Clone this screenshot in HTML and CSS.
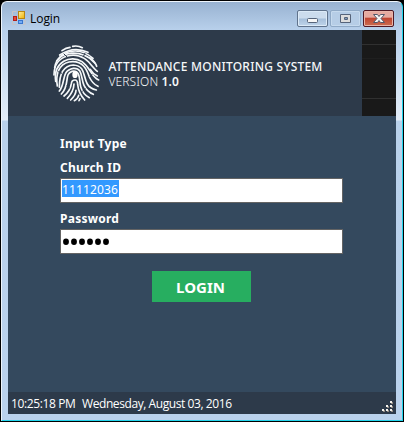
FILE: index.html
```html
<!DOCTYPE html>
<html lang="en">
<head>
<meta charset="utf-8">
<title>Login</title>
<link rel="stylesheet" href="styles.css">
</head>
<body>
<div class="desktop">
<main class="window">
  <header class="titlebar">
    <svg class="app-icon" width="14" height="14" viewBox="0 0 14 14">
      <defs><linearGradient id="gold" x2="1" y2="1"><stop stop-color="#fff0a0"/><stop offset="1" stop-color="#eeb000"/></linearGradient></defs>
      <path d="M.5 4.5V.5h4M.5 10v3.500h4M11 13.500h2V9" fill="none" stroke="#c9c4c4"/>
      <rect x="6.500" y=".5" width="6" height="7" fill="url(#gold)" stroke="#b98510"/>
      <rect x="1.500" y="5.500" width="3" height="4" fill="#e34a36" stroke="#b51e18"/>
      <rect x="6.500" y="9.500" width="4" height="3" fill="#75acf4" stroke="#3976cf"/>
    </svg>
    <h1>Login</h1>
    <div class="controls">
      <button class="control" aria-label="Minimize"><svg width="29" height="15"><rect x="9.500" y="7.500" width="10" height="4" rx="1" fill="#f6f6f6" stroke="#56647a"/></svg></button>
      <button class="control disabled" aria-label="Maximize"><svg width="29" height="15"><path d="M9.500 3.500h10v8h-10zM13.500 6.500h3v2h-3z" fill="#ddd" stroke="#56647a"/><path d="M14 7h2v1h-2z" fill="#7e99b9"/></svg></button>
      <button class="control close" aria-label="Close"><svg width="29" height="15"><path d="M9.500 3.500h4l1.500 2 1.500-2h4l-3.500 4 3.500 4h-4l-1.500-2-1.500 2h-4l3.500-4z" fill="#f5f5f5" stroke="#53596b"/></svg></button>
    </div>
  </header>
  <section class="client">
    <div class="banner">
      <div class="brand">
        <svg class="fingerprint" width="50" height="60" viewBox="0 0 150 180">
          <g fill="none" stroke="#f5f8fa" stroke-width="5" stroke-linecap="round">
            <path d="M30 20Q42 11 54 10M62 7Q78 4 91 11M23 33Q65 5 108 25"/>
            <path d="M14 51Q33 21 70 21Q99 21 123 43"/>
            <path d="M8 71C15 16 95 14 129 58"/>
            <path d="M6 93C6 29 78 18 110 54Q128 76 136 82"/>
            <path d="M11 112C3 52 57 31 90 53C118 73 115 96 140 108"/>
            <path d="M16 126C10 90 21 61 51 54C97 46 107 86 112 99Q121 119 138 127"/>
            <path d="M22 130C22 90 35 65 64 63C101 65 93 98 106 120Q114 134 133 138"/>
            <path d="M22 141C42 118 26 79 64 73C93 71 86 103 96 124Q105 143 124 151"/>
            <path d="M28 150C55 123 35 90 60 82C86 77 81 107 86 128Q92 151 112 161"/>
            <path d="M36 156Q55 141 58 119Q59 108 69 108Q77 108 77 122Q80 149 98 168"/>
            <path d="M46 163Q65 143 66 120M56 168Q72 153 72 139M67 170Q78 164 80 154M81 170L84 164"/>
            <path d="M113 41Q129 52 134 67M115 76Q123 90 136 96"/>
          </g>
          <ellipse cx="69" cy="92" rx="8" ry="10" fill="#fff"/>
          <path d="M35 29L45 39M99 27L94 38M18 83L30 88M121 90L114 98M44 125L53 132M91 142L101 134" stroke="#2d3a4a" stroke-width="3"/>
        </svg>
        <div class="brand-text"><p class="system-name">ATTENDANCE MONITORING SYSTEM</p><p class="version">VERSION <b>1.0</b></p></div>
      </div>
      <div class="side-panel"><i></i><i></i><i></i><i></i></div>
    </div>
    <form class="login-form">
      <h2>Input Type</h2>
      <label for="church">Church ID</label>
      <div class="field" id="church"><span class="selected">11112036</span></div>
      <label class="password-label">Password</label>
      <div class="field password"><svg width="50" height="21"><g fill="#000"><ellipse cx="4" cy="10.700" rx="2.900" ry="3.300"/><ellipse cx="12" cy="10.700" rx="2.900" ry="3.300"/><ellipse cx="20" cy="10.700" rx="2.900" ry="3.300"/><ellipse cx="28" cy="10.700" rx="2.900" ry="3.300"/><ellipse cx="36" cy="10.700" rx="2.900" ry="3.300"/><ellipse cx="44" cy="10.700" rx="2.900" ry="3.300"/></g></svg></div>
      <button class="login-button" type="button"><span>LOGIN</span></button>
    </form>
    <footer class="status"><span class="time">10:25:18 PM</span><span class="date">Wednesday, August 03, 2016</span>
      <svg class="grip" width="12" height="12"><path d="M9 1h2v2H9zM5 5h2v2H5zM9 5h2v2H9zM1 9h2v2H1zM5 9h2v2H5zM9 9h2v2H9z" fill="#918a83"/><path d="M8 0h2v2H8zM4 4h2v2H4zM8 4h2v2H8zM0 8h2v2H0zM4 8h2v2H4zM8 8h2v2H8z" fill="#f5f3ee"/></svg>
    </footer>
  </section>
</main>
</div>
</body>
</html>
```
FILE: styles.css
```css
* { box-sizing: border-box; }
body { margin: 0; background: #fff; font-family: "Noto Sans", "Open Sans", sans-serif; overflow: hidden; }
h1, h2, p { margin: 0; }
.desktop { width: 404px; height: 422px; padding: 1px; background: #000; }
.window {
  width: 402px; height: 420px; padding: 0 6px;
  border: 1px solid #eef5fc; border-right-color: #22d5ed; border-bottom-color: #22d5ed;
  border-radius: 6px 6px 0 0;
  background: linear-gradient(#98b2d1 0, #b8d0eb 28px, #cfe0f2 75px, #e3edf8 118px, #b9d1eb 119px, #bad2ed 100%);
}
.titlebar { height: 28px; display: flex; align-items: flex-start; padding: 9px 2px 0 4px; }
.app-icon { display: block; flex: none; }
h1 { margin: -1px 0 0 4px; font: 12px/17px "Open Sans", sans-serif; color: #000; letter-spacing: -.05px; }
.controls { margin: -1px 0 0 auto; display: flex; gap: 2px; }
.control { width: 31px; height: 17px; padding: 0; border: 1px solid #60738c; border-radius: 2px; background: linear-gradient(#ccdced 0 48%, #a6bfda 52%, #bfd4ea); box-shadow: inset 0 0 0 1px #dceaf7; }
.control svg { display: block; }
.disabled { border-color: #8fa9c6; background: #b6cde6; box-shadow: inset 0 0 0 1px #c6daee; }
.close { border-color: #4f1824; background: linear-gradient(#e6aaa0 0 40%, #c14632 50%, #cb6d50); box-shadow: inset 0 0 0 1px #e9b5a9; }
.client { width: 388px; height: 384px; display: flex; flex-direction: column; background: #34495e; }
.banner { height: 86px; display: flex; }
.brand { width: 354px; display: flex; padding: 14px 0 0 44px; background: #2d3a4a; }
.fingerprint { display: block; flex: none; }
.brand-text { padding: 15px 0 0 6.500px; color: #f5f7f9; white-space: nowrap; }
.system-name { font: 500 12px/15px "Noto Sans", sans-serif; letter-spacing: .24px; }
.version { font: 300 12px/15px "Noto Sans", sans-serif; letter-spacing: .1px; }
.version b { font-weight: 600; }
.side-panel { width: 34px; background: #191919; }
.side-panel i { display: block; height: 15px; border-bottom: 1px solid #303030; }
.side-panel i:nth-child(2) { height: 14px; border-color: #1f1f1f; }
.side-panel i:nth-child(3) { height: 40px; border-color: #303030; }
.side-panel i:nth-child(4) { border: 0; }
.login-form { height: 276px; padding: 19px 53px 0 52px; display: flex; flex-direction: column; color: #fff; }
h2, label { font: 700 12px/18px "Noto Sans", sans-serif; letter-spacing: .25px; }
label { margin-top: 6px; }
.field { height: 25px; margin-top: 1px; border: 1px solid #646464; background: #fff; padding: 1px; }
.selected { display: block; width: 57px; height: 17px; background: #3399ff; color: #fff; font: 12px/19px "Noto Sans", sans-serif; letter-spacing: .15px; }
.password-label { margin-top: 7px; }
.field svg { display: block; }
.login-button { width: 99px; height: 31px; margin: 17px 0 0 92px; padding: 0 2px 0 0; border: 0; background: #27ae60; color: #fff; font: 700 15px/33px "Noto Sans", sans-serif; }
.status { height: 22px; display: flex; padding-left: 3px; background: #2d3a4a; color: #fff; font: 12px/24px "Open Sans", sans-serif; white-space: nowrap; }
.time { width: 71px; letter-spacing: -.38px; }
.date { letter-spacing: -.42px; }
.grip { margin: 9px 2px 0 auto; }
```
